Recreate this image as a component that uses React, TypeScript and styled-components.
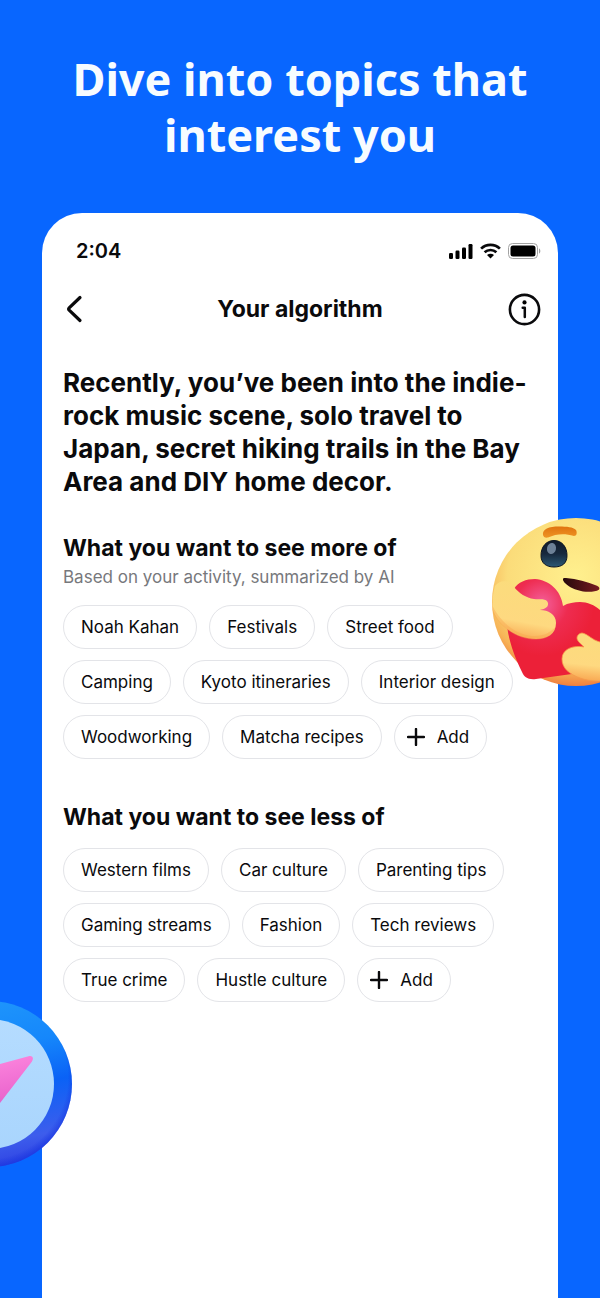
import styled, { createGlobalStyle } from 'styled-components';

const GlobalStyle = createGlobalStyle`
    * {
        box-sizing: border-box;
    }

    body {
        margin: 0;
        background: #0866ff;
        color: #0a0a0c;
        font-family: Inter, 'Liberation Sans', sans-serif;
    }
`;

const Page = styled.main`
    display: flex;
    flex-direction: column;
    min-height: 100vh;
    overflow: hidden;
`;

const Headline = styled.h1`
    margin: 0;
    padding: 51px 60px 50px;
    color: #f7fcff;
    font-family: 'Noto Sans', 'Open Sans', sans-serif;
    font-size: 45px;
    font-weight: 700;
    line-height: 56px;
    text-align: center;
`;

const Stage = styled.div`
    position: relative;
    display: flex;
    flex: 1;
    padding: 0 42px;
`;

const Phone = styled.section`
    flex: 1;
    min-width: 0;
    padding: 24px 17px 48px 21px;
    border-radius: 40px 40px 0 0;
    background: #fff;
`;

const StatusBar = styled.div`
    display: flex;
    align-items: center;
    justify-content: space-between;
    height: 28px;
    padding-left: 13px;
`;

const Clock = styled.time`
    font-size: 20px;
    font-weight: 600;
`;

const StatusIcons = styled.div`
    display: flex;
    align-items: center;
    gap: 7px;

    svg {
        display: block;
    }
`;

const NavBar = styled.header`
    display: grid;
    grid-template-columns: 33px 1fr 37px;
    align-items: center;
    height: 40px;
    margin-top: 24px;
`;

const NavTitle = styled.h2`
    margin: 0;
    font-size: 23px;
    font-weight: 700;
    line-height: 28px;
    text-align: center;
`;

const IconButton = styled.button<{ $end?: boolean }>`
    display: flex;
    justify-content: ${({ $end }) => ($end ? 'flex-end' : 'flex-start')};
    padding: 0;
    border: 0;
    background: none;
    color: inherit;
    cursor: pointer;
`;

const Summary = styled.p`
    margin: 37px 0 0;
    font-size: 26px;
    font-weight: 700;
    line-height: 33px;
`;

const TopicSection = styled.section<{ $top: number }>`
    margin-top: ${({ $top }) => $top}px;
`;

const SectionTitle = styled.h3`
    margin: 0;
    font-size: 23px;
    font-weight: 700;
    line-height: 30px;
`;

const Hint = styled.p`
    margin: 2px 0 0;
    color: #77787c;
    font-size: 17px;
    line-height: 24px;
`;

const ChipList = styled.div`
    display: flex;
    flex-direction: column;
    gap: 11px;
    margin-top: 16px;
`;

const ChipRow = styled.div`
    display: flex;
    flex-wrap: wrap;
    gap: 11px 12px;
`;

const Chip = styled.button<{ $add?: boolean }>`
    display: flex;
    align-items: center;
    gap: 12px;
    height: 44px;
    padding: 0 17px 0 ${({ $add }) => ($add ? 12 : 17)}px;
    border: 1px solid #e3e4e8;
    border-radius: 22px;
    background: #fff;
    color: inherit;
    font-family: inherit;
    font-size: 17px;
    cursor: pointer;
`;

const HugEmoji = styled.svg`
    position: absolute;
    top: 305px;
    right: -60px;
    width: 168px;
    height: 168px;
`;

const CompassBadge = styled.svg`
    position: absolute;
    top: 788px;
    left: -94px;
    width: 166px;
    height: 166px;
`;

const ADD = '+';

const moreTopics = [
    ['Noah Kahan', 'Festivals', 'Street food'],
    ['Camping', 'Kyoto itineraries', 'Interior design'],
    ['Woodworking', 'Matcha recipes', ADD],
];

const lessTopics = [
    ['Western films', 'Car culture', 'Parenting tips'],
    ['Gaming streams', 'Fashion', 'Tech reviews'],
    ['True crime', 'Hustle culture', ADD],
];

const PlusIcon = () => (
    <svg width="18" height="18" viewBox="0 0 18 18" aria-hidden="true">
        <path d="M9 1v16M1 9h16" stroke="currentColor" strokeWidth="2.4" strokeLinecap="round" />
    </svg>
);

const SignalIcon = () => (
    <svg width="24" height="16" viewBox="0 0 24 16" aria-hidden="true">
        <rect x="0" y="10" width="4" height="6" rx="1.2" />
        <rect x="6.5" y="7.5" width="4" height="8.5" rx="1.2" />
        <rect x="13" y="4.5" width="4" height="11.5" rx="1.2" />
        <rect x="19.5" y="1" width="4" height="15" rx="1.2" />
    </svg>
);

const WifiIcon = () => (
    <svg width="21" height="16" viewBox="0 0 21 16" aria-hidden="true">
        <g fill="none" stroke="currentColor" strokeWidth="2.7">
            <path d="M1.1 5.6C6.3.6 14.7.6 19.9 5.6" />
            <path d="M4.6 9.3c3.3-3.1 8.5-3.1 11.8 0" />
        </g>
        <path d="M7 11.9c2-1.7 5-1.7 7 0l-3.5 3.6z" />
    </svg>
);

const BatteryIcon = () => (
    <svg width="33" height="16" viewBox="0 0 33 16" aria-hidden="true">
        <rect x=".5" y=".5" width="29" height="15" rx="4" fill="none" stroke="#a3a3a3" />
        <rect x="2.5" y="2.5" width="25" height="11" rx="2.5" />
        <path d="M31 5.5c1.8.6 1.8 4.4 0 5z" fill="#a3a3a3" />
    </svg>
);

const BackIcon = () => (
    <svg width="22" height="32" viewBox="0 0 22 32" aria-hidden="true">
        <path
            d="M17 4.5 6.2 14.8q-1.1 1.2 0 2.4L17 27.5"
            fill="none"
            stroke="currentColor"
            strokeWidth="3.2"
            strokeLinecap="round"
        />
    </svg>
);

const InfoIcon = () => (
    <svg width="33" height="33" viewBox="0 0 33 33" aria-hidden="true">
        <circle cx="16.5" cy="16.5" r="14.6" fill="none" stroke="currentColor" strokeWidth="2.6" />
        <circle cx="16.5" cy="9.4" r="2.1" />
        <path
            d="M14.7 14.8h2.1v9.3"
            fill="none"
            stroke="currentColor"
            strokeWidth="2.5"
            strokeLinecap="round"
            strokeLinejoin="round"
        />
    </svg>
);

const Emoji = () => (
    <HugEmoji viewBox="0 0 168 168" aria-hidden="true">
        <defs>
            <radialGradient id="face" cx="0.5" cy="0.35" r="0.66">
                <stop offset="0" stopColor="#fff08e" />
                <stop offset="0.62" stopColor="#fbdc7a" />
                <stop offset="0.85" stopColor="#f7b457" />
                <stop offset="1" stopColor="#f07a3c" />
            </radialGradient>
            <linearGradient id="brow" x1="0" y1="0" x2="0" y2="1">
                <stop offset="0" stopColor="#e0730f" />
                <stop offset="1" stopColor="#ee9424" />
            </linearGradient>
            <linearGradient id="eye" x1="0" y1="0" x2="0" y2="1">
                <stop offset="0" stopColor="#101a2a" />
                <stop offset="0.5" stopColor="#17293d" />
                <stop offset="1" stopColor="#2c5975" />
            </linearGradient>
            <radialGradient id="heart" gradientUnits="userSpaceOnUse" cx="50" cy="86" r="52">
                <stop offset="0" stopColor="#f4609c" />
                <stop offset="0.5" stopColor="#ee2c50" />
                <stop offset="1" stopColor="#ec2038" />
            </radialGradient>
            <linearGradient id="arm" x1="0.6" y1="0" x2="0.4" y2="1">
                <stop offset="0" stopColor="#fbdc7c" />
                <stop offset="0.7" stopColor="#fed980" />
                <stop offset="1" stopColor="#f9ab55" />
            </linearGradient>
            <linearGradient id="mouth" x1="0" y1="0" x2="1" y2="0">
                <stop offset="0" stopColor="#25090b" />
                <stop offset="1" stopColor="#791b20" />
            </linearGradient>
        </defs>
        <circle cx="84" cy="84" r="84" fill="url(#face)" />
        <path d="M51 17C50 11 57 8.500 67 8.500c8 0 14 .5 17 3.500 1.500 3 .5 6-2 6-10-3-18-2-26 1.500-3 .5-4.500-.5-5-2.500z" fill="url(#brow)" />
        <path d="M62 22.500c8 0 13 6.500 13 15 0 8-5 11.500-13 11.500s-13-4-13-11.500c0-8.500 5-15 13-15z" fill="url(#eye)" stroke="#0b1422" />
        <ellipse cx="59.500" cy="30.500" rx="4.500" ry="5.500" fill="#6d8197" transform="rotate(12 59.500 30.500)" />
        <path d="M71 61.500c0-1.500 1-1.800 3-1.500 11 1 21 4 31 7.800 2.500 1 3 3 1.800 4C104 73.800 97 74.300 91 73.500c-8-1.500-14-4.500-17.500-8-1.600-1.500-2.500-2.900-2.500-4z" fill="url(#mouth)" />
        <path d="M22 71c4-7 12-10 21-10 14 1 26 11 28 27 5-3 11-4 17-4 12 0 24 8 27 20l30 5c-4 26-30 42-58 46l-43 6c-8 1-12-2-14-7C23 140 17 124 15 108z" fill="url(#heart)" />
        <path d="M3 68C8 61 18 62 22 69c5 6 12 11 20 12 5 .6 13-1 14 4 .6 5-4 6-8 7 8 0 16 4 16 13 0 11-9 16-20 16C26 121 8 110 1 92c-1-9 0-17 2-24z" fill="url(#arm)" />
        <path d="M.5 88C10 107 27 118 43 118c9 0 16-4 20.500-9-1.500 8-9.500 12.500-19.500 12.500C26 121.500 8 110 1 94z" fill="#f7a44d" opacity=".4" />
        <path d="M160 118c-20 8-36 10-52 6-8-2-12-8-18-9-4 .5-6 4-4.500 7 1.500 3 4 4 6.500 7-9-2-22 1-22 12 0 9 7 15 18 19 22 8 52 0 72-20z" fill="url(#arm)" stroke="#f59a4b" strokeWidth="0.800" />
    </HugEmoji>
);

const Compass = () => (
    <CompassBadge viewBox="0 0 166 166" aria-hidden="true">
        <defs>
            <linearGradient id="ring" x1="0.4" y1="0" x2="0.6" y2="1">
                <stop offset="0" stopColor="#1f96fb" />
                <stop offset="0.3" stopColor="#1587fb" />
                <stop offset="0.55" stopColor="#0a62f6" />
                <stop offset="0.85" stopColor="#3d5dec" />
                <stop offset="1" stopColor="#2f43e3" />
            </linearGradient>
            <radialGradient id="rim" cx="0.48" cy="0.46" r="0.55">
                <stop offset="0.9" stopColor="#1432e0" stopOpacity="0" />
                <stop offset="1" stopColor="#1432e0" stopOpacity="0.7" />
            </radialGradient>
            <linearGradient id="dial" x1="0" y1="0" x2="0" y2="1">
                <stop offset="0" stopColor="#b5dcff" />
                <stop offset="1" stopColor="#a9d5fd" />
            </linearGradient>
            <linearGradient id="needle" x1="0.7" y1="0" x2="0.9" y2="1">
                <stop offset="0" stopColor="#fb83dc" />
                <stop offset="0.5" stopColor="#ec68cf" />
                <stop offset="1" stopColor="#b958bd" />
            </linearGradient>
        </defs>
        <circle cx="83" cy="83" r="83" fill="url(#ring)" />
        <circle cx="83" cy="83" r="83" fill="url(#rim)" />
        <circle cx="83" cy="83" r="65" fill="url(#dial)" />
        <path d="M60 72l34-9 29.500-8c3-.5 4.500 2 2.500 5.500L94 102l-20 24z" fill="url(#needle)" />
    </CompassBadge>
);

const TopicChips = ({ rows }: { rows: string[][] }) => (
    <ChipList>
        {rows.map((row) => (
            <ChipRow key={row[0]}>
                {row.map((topic) => (
                    topic === ADD ? (
                        <Chip key={topic} type="button" $add>
                            <PlusIcon />
                            Add
                        </Chip>
                    ) : (
                        <Chip key={topic} type="button">{topic}</Chip>
                    )
                ))}
            </ChipRow>
        ))}
    </ChipList>
);

const App = () => (
    <>
        <GlobalStyle />
        <Page>
            <Headline>Dive into topics that interest you</Headline>
            <Stage>
                <Phone>
                    <StatusBar>
                        <Clock>2:04</Clock>
                        <StatusIcons>
                            <SignalIcon />
                            <WifiIcon />
                            <BatteryIcon />
                        </StatusIcons>
                    </StatusBar>
                    <NavBar>
                        <IconButton type="button" aria-label="Back">
                            <BackIcon />
                        </IconButton>
                        <NavTitle>Your algorithm</NavTitle>
                        <IconButton type="button" aria-label="About your algorithm" $end>
                            <InfoIcon />
                        </IconButton>
                    </NavBar>
                    <Summary>
                        Recently, you’ve been into the indie-rock music scene, solo travel to
                        Japan, secret hiking trails in the Bay Area and DIY home decor.
                    </Summary>
                    <TopicSection $top={35}>
                        <SectionTitle>What you want to see more of</SectionTitle>
                        <Hint>Based on your activity, summarized by AI</Hint>
                        <TopicChips rows={moreTopics} />
                    </TopicSection>
                    <TopicSection $top={43}>
                        <SectionTitle>What you want to see less of</SectionTitle>
                        <TopicChips rows={lessTopics} />
                    </TopicSection>
                </Phone>
                <Emoji />
                <Compass />
            </Stage>
        </Page>
    </>
);

export default App;
